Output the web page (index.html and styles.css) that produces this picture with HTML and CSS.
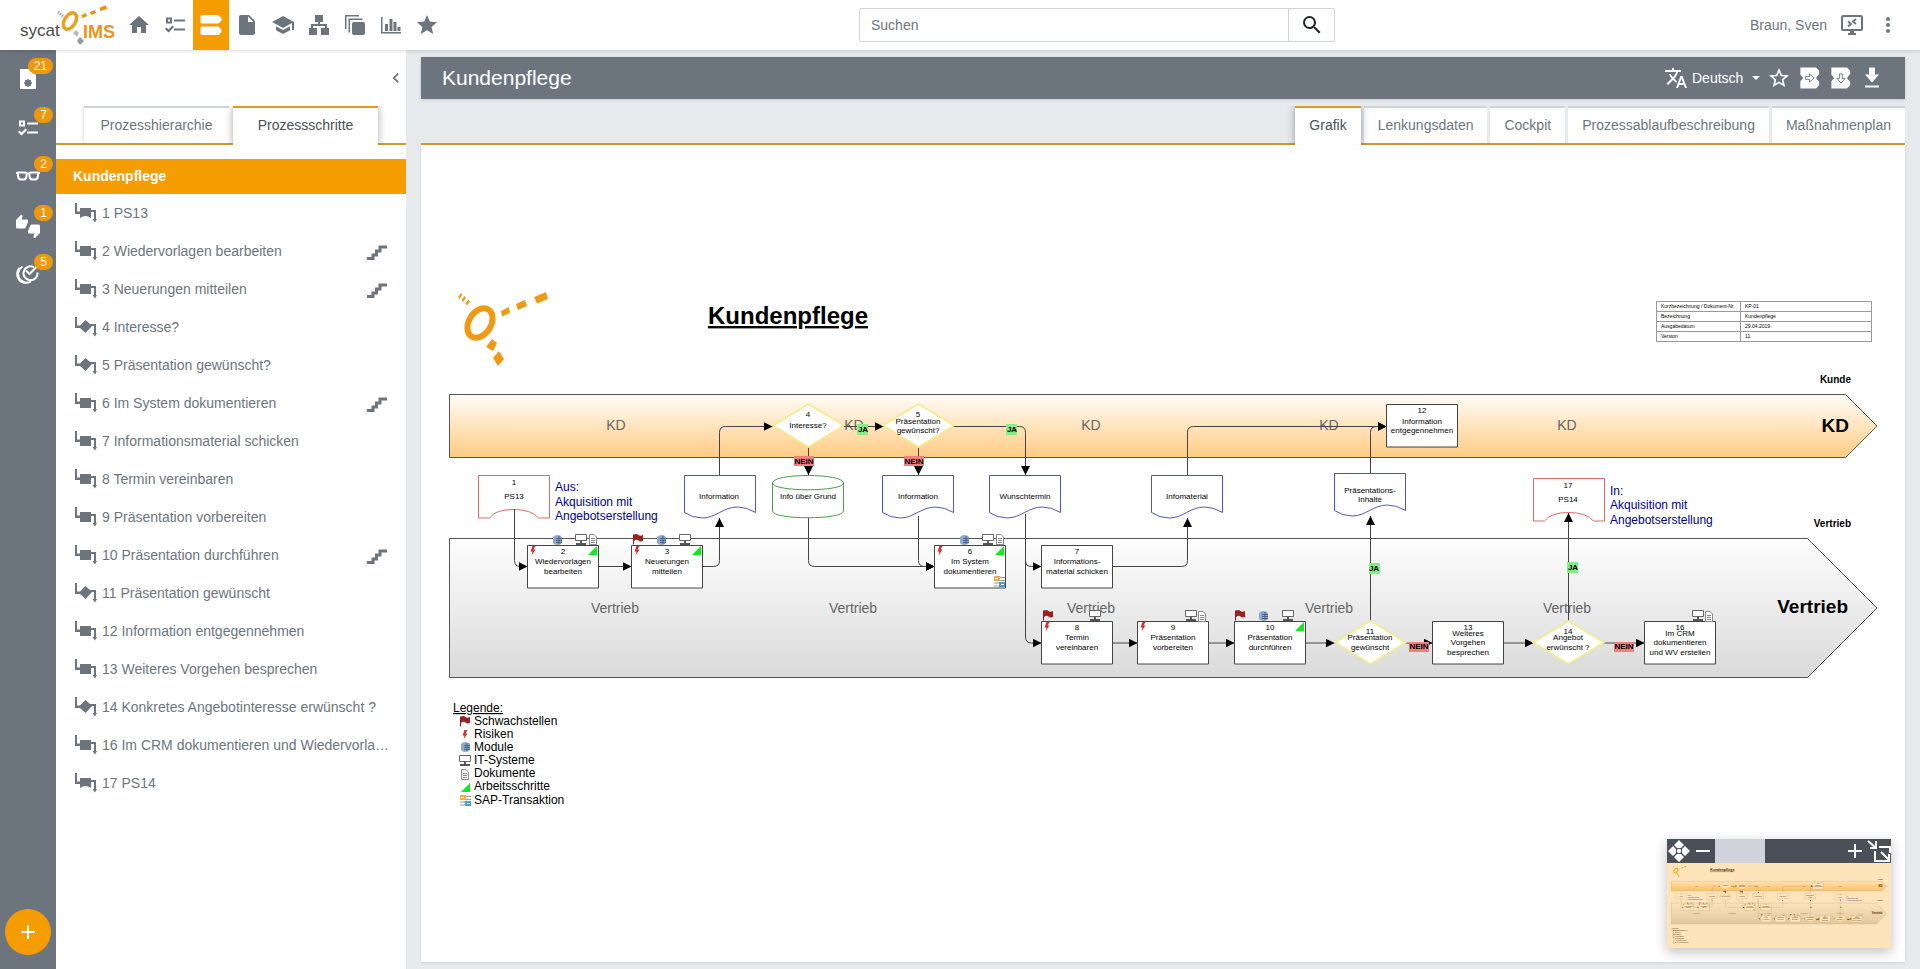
FILE: index.html
```html
<!DOCTYPE html>
<html lang="de">
<head>
<meta charset="utf-8">
<title>sycat IMS – Kundenpflege</title>
<link rel="stylesheet" href="styles.css">
</head>
<body>
<svg class="sprite" aria-hidden="true">
  <symbol id="i-home" viewBox="0 0 24 24"><path d="M10,20V14H14V20H19V12H22L12,3L2,12H5V20H10Z"/></symbol>
  <symbol id="i-tasks" viewBox="0 0 24 24"><path fill-rule="evenodd" d="M3 4.500h6v6H3zM5 6.500v2h2v-2zM11 6.500h11v2H11zM11 15.500h11v2H11zM2 16l1.500-1.500L5.500 16.500 9.500 12.500 11 14l-5.500 5.500z"/></symbol>
  <symbol id="i-process" viewBox="0 0 24 24"><path d="M2.500 2H19.500L22.500 5V7.500L19.500 10.500H2.500L1.500 9.500V3zM2.500 13.500H19.500L22.500 16.500V19L19.500 22H2.500L1.500 21V14.500z"/></symbol>
  <symbol id="i-file" viewBox="0 0 24 24"><path d="M13,9V3.500L18.500,9M6,2C4.890,2 4,2.890 4,4V20A2,2 0 0,0 6,22H18A2,2 0 0,0 20,20V8L14,2H6Z"/></symbol>
  <symbol id="i-school" viewBox="0 0 24 24"><path d="M12,3L1,9L12,15L21,10.090V17H23V9M5,13.180V17.180L12,21L19,17.180V13.180L12,17L5,13.180Z"/></symbol>
  <symbol id="i-org" viewBox="0 0 24 24"><path d="M8 2h8v7h-3v2h7v4h2v7h-8v-7h4v-2H6v2h4v7H2v-7h2v-4h7V9H8z"/></symbol>
  <symbol id="i-stack" viewBox="0 0 24 24"><path d="M2 2h14v1.500H3.500V16H2zM5.500 5.500h14V7H7v12.500H5.500zM11 9h9a2 2 0 0 1 2 2v9a2 2 0 0 1-2 2h-9a2 2 0 0 1-2-2v-9a2 2 0 0 1 2-2z"/></symbol>
  <symbol id="i-chart" viewBox="0 0 24 24"><path d="M2 4h1.500v15H22v1.500H2zM6 11h3v7H6zM10.500 6h3v12h-3zM14.500 9h3v9h-3zM18.500 14h3v4h-3z"/></symbol>
  <symbol id="i-star" viewBox="0 0 24 24"><path d="M12,17.270L18.180,21L16.540,13.970L22,9.240L14.810,8.620L12,2L9.190,8.620L2,9.240L7.450,13.970L5.820,21L12,17.270Z"/></symbol>
  <symbol id="i-star-outline" viewBox="0 0 24 24"><path d="M12,15.390L8.240,17.660L9.230,13.380L5.910,10.500L10.290,10.130L12,6.090L13.710,10.130L18.090,10.500L14.770,13.380L15.760,17.660M22,9.240L14.810,8.630L12,2L9.190,8.630L2,9.240L7.450,13.970L5.820,21L12,17.270L18.180,21L16.540,13.970L22,9.240Z"/></symbol>
  <symbol id="i-search" viewBox="0 0 24 24"><path d="M9.500,3A6.500,6.500 0 0,1 16,9.500C16,11.110 15.410,12.590 14.440,13.730L14.710,14H15.500L20.500,19L19,20.500L14,15.500V14.710L13.730,14.440C12.590,15.410 11.110,16 9.500,16A6.500,6.500 0 0,1 3,9.500A6.500,6.500 0 0,1 9.500,3M9.500,5C7,5 5,7 5,9.500C5,12 7,14 9.500,14C12,14 14,12 14,9.500C14,7 12,5 9.500,5Z"/></symbol>
  <symbol id="i-remote" viewBox="0 0 24 24"><path fill-rule="evenodd" d="M3 2h18a2 2 0 0 1 2 2v12a2 2 0 0 1-2 2h-7v2h2v2H8v-2h2v-2H3a2 2 0 0 1-2-2V4a2 2 0 0 1 2-2zM3 4v12h18V4z"/><path d="M8 8.500l3 2.500-3 2.500M16 6l-3 2.500 3 2.500" fill="none" stroke="currentColor" stroke-width="2"/></symbol>
  <symbol id="i-dots" viewBox="0 0 24 24"><circle cx="12" cy="6" r="2"/><circle cx="12" cy="12" r="2"/><circle cx="12" cy="18" r="2"/></symbol>
  <symbol id="i-chevron" viewBox="0 0 24 24"><path d="M15.410,16.580L10.830,12L15.410,7.410L14,6L8,12L14,18L15.410,16.580Z"/></symbol>
  <symbol id="i-translate" viewBox="0 0 24 24"><path d="M12.870,15.070L10.330,12.560L10.360,12.530C12.100,10.590 13.340,8.360 14.070,6H17V4H10V2H8V4H1V6H12.170C11.500,7.920 10.440,9.750 9,11.350C8.070,10.320 7.300,9.190 6.690,8H4.690C5.420,9.630 6.420,11.170 7.670,12.560L2.580,17.580L4,19L9,14L12.110,17.110L12.870,15.070M18.500,10H16.500L12,22H14L15.120,19H19.870L21,22H23L18.500,10M15.880,17L17.500,12.670L19.120,17H15.880Z"/></symbol>
  <symbol id="i-next" viewBox="0 0 24 24"><path d="M1.500 0.500h17l3.500 3.500v4l-3 3v2l3 3v4l-3.500 3.500h-17v-8l3-3.500-3-3.500z"/><path d="M7 10.500h4.500v-3l5 4.500-5 4.500v-3H7z" fill="#fff" stroke="#6c757d"/></symbol>
  <symbol id="i-down" viewBox="0 0 24 24"><path d="M1.500 0.500h17l3.500 3.500v4l-3 3v2l3 3v4l-3.500 3.500h-17v-8l3-3.500-3-3.500z"/><path d="M10.500 7.500h3v5h3l-4.500 5-4.500-5h3z" fill="#fff" stroke="#6c757d"/></symbol>
  <symbol id="i-download" viewBox="0 0 24 24"><path d="M5,21.500H19V19.500H5M19,8.500H15V1.500H9V8.500H5L12,16.500L19,8.500Z"/></symbol>
  <symbol id="i-filegear" viewBox="0 0 24 24"><path d="M4 2h10l6 6v14H4z"/><g stroke="#6c757d" stroke-width="1.500"><circle cx="12" cy="16" r="2.500" fill="#6c757d"/><path d="M12 12v8M8 16h8M9.300 13.300l5.400 5.400M14.700 13.300l-5.400 5.400"/></g></symbol>
  <symbol id="i-glasses" viewBox="0 0 24 24"><path fill="none" stroke="currentColor" stroke-width="2" d="M0 8.500Q1 7.500 3 7.500H9.500Q10.500 7.500 10.500 9V11Q10 14.500 8 14.500H5Q2.500 14.500 2 11V8M24 8.500Q23 7.500 21 7.500H14.500Q13.500 7.500 13.500 9V11Q14 14.500 16 14.500H19Q21.500 14.500 22 11V8M10.500 8.500H13.500"/></symbol>
  <symbol id="i-thumbs" viewBox="0 0 24 24"><path d="M22.500,10.500H15.750C15.130,10.500 14.600,10.880 14.370,11.410L12.110,16.700C12.040,16.870 12,17.060 12,17.250V18.500A1,1 0 0,0 13,19.500H18.180L17.500,22.680V22.920C17.500,23.230 17.630,23.500 17.830,23.720L18.620,24.500L23.560,19.560C23.830,19.290 24,18.910 24,18.500V12A1.500,1.500 0 0,0 22.500,10.500M12,6.500A1,1 0 0,0 11,5.500H5.820L6.500,2.320V2.090C6.500,1.780 6.370,1.500 6.170,1.290L5.380,0.500L0.440,5.440C0.170,5.710 0,6.090 0,6.500V13A1.500,1.500 0 0,0 1.500,14.500H8.250C8.870,14.500 9.400,14.110 9.630,13.590L11.890,8.300C11.960,8.130 12,7.940 12,7.750V6.500Z"/></symbol>
  <symbol id="i-target" viewBox="0 0 24 24"><path fill="none" stroke="currentColor" stroke-width="2" d="M18 4.200A7 7 0 1 0 21.500 9.500M10 7.500l3.500 3.500L21 3.500M6.500 3.500A8.500 8.500 0 0 0 15 18.500M3.500 5A9 9 0 0 0 10 20"/></symbol>
  <symbol id="i-plus" viewBox="0 0 24 24"><path d="M19 13h-6v6h-2v-6H5v-2h6V5h2v6h6z"/></symbol>
  <symbol id="i-minus" viewBox="0 0 24 24"><path d="M5 11h14v2H5z"/></symbol>
  <symbol id="i-move" viewBox="0 0 24 24"><path d="M12 1l5 5-3 3h-4L7 6zM12 23l5-5-3-3h-4l-3 3zM1 12l5-5 3 3v4l-3 3zM23 12l-5-5-3 3v4l3 3z"/><circle cx="12" cy="12" r="2.200"/></symbol>
  <symbol id="i-fit" viewBox="0 0 24 24"><path fill="none" stroke="currentColor" stroke-width="2" d="M1 2l7 6M3 9h6V2M8 12V22H16M12 8H23V14M14 13l8 8M22 15v7h-6"/></symbol>

  <symbol id="s-task" viewBox="0 0 22 20"><path d="M0 0h2v8.500h3V5h11v2h5v9h1l-2 3.500-2.500-3.500h1.500V9h-3v6H5v-4H0z"/></symbol>
  <symbol id="s-port" viewBox="0 0 22 20"><path d="M0 0h2v8.500h3V5h11v2h5v9h1l-2 3.500-2.500-3.500h1.500V9h-3v6q-5.500-4-11 0v-4H0z"/></symbol>
  <symbol id="s-decision" viewBox="0 0 22 20"><path d="M0 0h2v8.500h3L10.500 3 15 7h6v9h1l-2 3.500-2.500-3.500h1.500V9h-2l-6.500 7L5 11H0z"/></symbol>
  <symbol id="s-stairs" viewBox="0 0 20 16"><path fill="none" stroke="currentColor" stroke-width="3" d="M0 13.500H6V10H9.500V6H13V2H20"/></symbol>
</svg>

<header class="topbar">
  <div class="topbar-left">
    <a class="logo" href="#" aria-label="sycat IMS">
      <svg viewBox="0 0 96 42" width="96" height="42">
        <text x="0" y="32" font-size="17" fill="#4a4a4a">sycat</text>
        <text x="63" y="34" font-size="18" font-weight="bold" fill="#e8941a">IMS</text>
        <ellipse cx="50" cy="17" rx="5.500" ry="9" transform="rotate(32 50 17)" fill="none" stroke="#e8a020" stroke-width="3.500"/>
        <path d="M62 12.500l4.500-2M70.500 9.500l5-2M80 5.500l6.500-2.500" stroke="#e8941a" stroke-width="3.500" fill="none"/>
        <path d="M38 8l6 5" stroke="#aaa" stroke-width="3" stroke-dasharray="1.500 1" fill="none"/>
        <path d="M53 29l3-3 3 3-2 4z" fill="#bbb"/><path d="M57 37l3-4 4 4-4 4z" fill="#999"/>
      </svg>
    </a>
    <nav class="mainnav" aria-label="Hauptnavigation">
      <a href="#" aria-label="Start"><svg><use href="#i-home"/></svg></a>
      <a href="#" aria-label="Aufgaben"><svg><use href="#i-tasks"/></svg></a>
      <a href="#" aria-label="Prozesse" class="active"><svg><use href="#i-process"/></svg></a>
      <a href="#" aria-label="Dokumente"><svg><use href="#i-file"/></svg></a>
      <a href="#" aria-label="Schulung"><svg><use href="#i-school"/></svg></a>
      <a href="#" aria-label="Organisation"><svg><use href="#i-org"/></svg></a>
      <a href="#" aria-label="Module"><svg><use href="#i-stack"/></svg></a>
      <a href="#" aria-label="Auswertung"><svg><use href="#i-chart"/></svg></a>
      <a href="#" aria-label="Favoriten"><svg><use href="#i-star"/></svg></a>
    </nav>
  </div>
  <form class="search">
    <input type="text" placeholder="Suchen" aria-label="Suchen">
    <button type="button" aria-label="Suche starten"><svg><use href="#i-search"/></svg></button>
  </form>
  <div class="topbar-right">
    <span>Braun, Sven</span>
    <button type="button" class="iconbtn" aria-label="Fernzugriff"><svg><use href="#i-remote"/></svg></button>
    <button type="button" class="iconbtn" aria-label="Menü"><svg><use href="#i-dots"/></svg></button>
  </div>
</header>

<div class="shell">
  <nav class="rail" aria-label="Schnellzugriff">
    <a href="#" aria-label="Dokumente"><svg><use href="#i-filegear"/></svg><span class="badge">21</span></a>
    <a href="#" aria-label="Aufgaben"><svg><use href="#i-tasks"/></svg><span class="badge">7</span></a>
    <a href="#" aria-label="Lesen"><svg><use href="#i-glasses"/></svg><span class="badge">2</span></a>
    <a href="#" aria-label="Freigaben"><svg><use href="#i-thumbs"/></svg><span class="badge">1</span></a>
    <a href="#" aria-label="Ziele"><svg><use href="#i-target"/></svg><span class="badge">5</span></a>
    <button type="button" class="fab" aria-label="Neu"><svg><use href="#i-plus"/></svg></button>
  </nav>

  <aside class="side">
    <div class="side-head"><button type="button" class="collapse" aria-label="Einklappen"><svg><use href="#i-chevron"/></svg></button></div>
    <div class="tabs side-tabs">
      <a href="#" class="tab">Prozesshierarchie</a>
      <a href="#" class="tab current">Prozessschritte</a>
    </div>
    <h2 class="side-title">Kundenpflege</h2>
    <ul class="steps">
      <li><a href="#"><svg class="kind"><use href="#s-port"/></svg><span>1 PS13</span></a></li>
      <li><a href="#"><svg class="kind"><use href="#s-task"/></svg><span>2 Wiedervorlagen bearbeiten</span><svg class="stairs"><use href="#s-stairs"/></svg></a></li>
      <li><a href="#"><svg class="kind"><use href="#s-task"/></svg><span>3 Neuerungen mitteilen</span><svg class="stairs"><use href="#s-stairs"/></svg></a></li>
      <li><a href="#"><svg class="kind"><use href="#s-decision"/></svg><span>4 Interesse?</span></a></li>
      <li><a href="#"><svg class="kind"><use href="#s-decision"/></svg><span>5 Präsentation gewünscht?</span></a></li>
      <li><a href="#"><svg class="kind"><use href="#s-task"/></svg><span>6 Im System dokumentieren</span><svg class="stairs"><use href="#s-stairs"/></svg></a></li>
      <li><a href="#"><svg class="kind"><use href="#s-task"/></svg><span>7 Informationsmaterial schicken</span></a></li>
      <li><a href="#"><svg class="kind"><use href="#s-task"/></svg><span>8 Termin vereinbaren</span></a></li>
      <li><a href="#"><svg class="kind"><use href="#s-task"/></svg><span>9 Präsentation vorbereiten</span></a></li>
      <li><a href="#"><svg class="kind"><use href="#s-task"/></svg><span>10 Präsentation durchführen</span><svg class="stairs"><use href="#s-stairs"/></svg></a></li>
      <li><a href="#"><svg class="kind"><use href="#s-decision"/></svg><span>11 Präsentation gewünscht</span></a></li>
      <li><a href="#"><svg class="kind"><use href="#s-task"/></svg><span>12 Information entgegennehmen</span></a></li>
      <li><a href="#"><svg class="kind"><use href="#s-task"/></svg><span>13 Weiteres Vorgehen besprechen</span></a></li>
      <li><a href="#"><svg class="kind"><use href="#s-decision"/></svg><span>14 Konkretes Angebotinteresse erwünscht ?</span></a></li>
      <li><a href="#"><svg class="kind"><use href="#s-task"/></svg><span>16 Im CRM dokumentieren und Wiedervorla…</span></a></li>
      <li><a href="#"><svg class="kind"><use href="#s-port"/></svg><span>17 PS14</span></a></li>
    </ul>
  </aside>

  <main class="content">
    <div class="titlebar">
      <h1>Kundenpflege</h1>
      <div class="tools">
        <label class="lang"><svg><use href="#i-translate"/></svg>
          <select aria-label="Sprache"><option>Deutsch</option></select><i class="caret"></i></label>
        <button type="button" class="iconbtn" aria-label="Favorit"><svg><use href="#i-star-outline"/></svg></button>
        <button type="button" class="iconbtn" aria-label="Nachfolger"><svg class="small"><use href="#i-next"/></svg></button>
        <button type="button" class="iconbtn" aria-label="Unterprozess"><svg class="small"><use href="#i-down"/></svg></button>
        <button type="button" class="iconbtn" aria-label="Herunterladen"><svg><use href="#i-download"/></svg></button>
      </div>
    </div>
    <div class="tabs main-tabs">
      <a href="#" class="tab current">Grafik</a>
      <a href="#" class="tab">Lenkungsdaten</a>
      <a href="#" class="tab">Cockpit</a>
      <a href="#" class="tab">Prozessablaufbeschreibung</a>
      <a href="#" class="tab">Maßnahmenplan</a>
    </div>
    <section class="panel">
      <svg class="diagram" viewBox="421 145 1484 817">
        <defs>
          <linearGradient id="g-kd" x1="0" y1="0" x2="0" y2="1"><stop offset="0" stop-color="#fffdf9"/><stop offset="1" stop-color="#ffcb82"/></linearGradient>
          <linearGradient id="g-v" x1="0" y1="0" x2="0" y2="1"><stop offset="0" stop-color="#fdfdfd"/><stop offset="1" stop-color="#dadada"/></linearGradient>
          <marker id="arrow" markerUnits="userSpaceOnUse" markerWidth="9" markerHeight="9" refX="9" refY="4.500" orient="auto"><path d="M0 0L9 4.500L0 9z"/></marker>
          <path id="n-box" d="M.5.5h71v42.500h-71z" fill="#fff" stroke="#444"/>
          <path id="n-doc" d="M.5.5h71v37q-9-5.500-18-5.500c-14 0-22 11-35 11q-10 0-18-5.500z" fill="#fff" stroke="#5353c0"/>
          <path id="n-port" d="M.5.5h71v42.500h-11q-7-8.500-25-8.500t-24 8.500h-11z" fill="#fff" stroke="#d96a6a"/>
          <path id="n-dia" d="M0 21.500L35.500 0L71 21.500L35.500 43z" fill="#fff" stroke="#f2eb8c" stroke-width="1.500"/>
          <path id="n-cyl" d="M.5 8C.5-2 71.500-2 71.500 8V36C71.500 45 .5 45 .5 36zM.5 8C.5 17 71.500 17 71.500 8" fill="#fff" stroke="#4f9a4f"/>
          <g id="m-flag"><path d="M.5.5V10.500" stroke="#8b1a1a"/><path d="M1 .5q3-1 4.500.5t4.500 0v6q-3 1-4.500-.5t-4.500.5z" fill="#9c2222"/></g>
          <path id="m-bolt" d="M2.500 0H5.500L3.500 3.500H5.500L1.500 9.500L2.500 5.500H0.500z" fill="#d42a2a"/>
          <g id="m-db"><path d="M0 2q1.500-2 4.500-2t4.500 2v6q-1.500 2-4.500 2t-4.500-2z" fill="#8fa9c9"/><path d="M3 3.500h6M3 5.500h6M3 7.500h6M6 1v8" stroke="#48658c" fill="none"/></g>
          <g id="m-pc"><path d="M.5.5h11v6h-11z" fill="#fff" stroke="#666"/><path d="M5 7h2v2h4v2H1V9h4z" fill="#555"/></g>
          <g id="m-doc"><path d="M.5.5h4.500l2.500 2.500v7.500h-7z" fill="#fff" stroke="#888"/><path d="M2 4.500h4M2 6.500h4M2 8.500h4" stroke="#888"/></g>
          <path id="m-tri" d="M0 9L9 0V9z" fill="#10e820"/>
          <g id="m-sap"><path d="M0 0h6v5H0z" fill="#f0a94e"/><path d="M5 6h6v5H5z" fill="#4d9fd6"/><path d="M6 1.500h5M6 4.500h5M0 7h5M0 10h5" stroke="#999"/><path d="M1 2.500h3M7 8.500h3" stroke="#fff"/></g>
        </defs>
        <g id="chart">
          <g transform="translate(457 292)" fill="#f09a14">
            <ellipse cx="23" cy="31" rx="11" ry="16" transform="rotate(32 23 31)" fill="none" stroke="#f09a14" stroke-width="6"/>
            <path d="M44 19l8-4 1 6-8 3.500zM59 12l9-4 2 6-9 4zM77 5l12-5 2 7-11 4.500zM29 55l6-8 5 4-4 8zM36 66l6-7 5 8-6 7z"/>
            <path d="M1 5l3-4 1.500 2-3 4zM4.500 8l3-4 1.500 2-3 4zM8.500 11.500l3-4 1.500 2-3 4z"/>
          </g>
          <text class="d-title" x="708" y="324">Kundenpflege</text>
          <foreignObject x="1656" y="301" width="216" height="42">
            <table class="d-meta">
              <tr><th scope="row">Kurzbezeichnung / Dokument-Nr.</th><td>KP-01</td></tr>
              <tr><th scope="row">Bezeichnung</th><td>Kundenpflege</td></tr>
              <tr><th scope="row">Ausgabedatum</th><td>29.04.2019</td></tr>
              <tr><th scope="row">Version</th><td>11</td></tr>
            </table>
          </foreignObject>
          <g stroke="#555">
            <path d="M449.500 394.500H1845.500L1877 426L1845.500 457.500H449.500z" fill="url(#g-kd)"/>
            <path d="M449.500 538.500H1807.500L1877 608L1807.500 677.500H449.500z" fill="url(#g-v)"/>
          </g>
          <g class="d-lane">
            <text x="616" y="430">KD</text><text x="854" y="430">KD</text><text x="1091" y="430">KD</text><text x="1329" y="430">KD</text><text x="1567" y="430">KD</text>
            <text x="615" y="613">Vertrieb</text><text x="853" y="613">Vertrieb</text><text x="1091" y="613">Vertrieb</text><text x="1329" y="613">Vertrieb</text><text x="1567" y="613">Vertrieb</text>
          </g>
          <g class="d-small"><text x="1851" y="383">Kunde</text><text x="1851" y="527">Vertrieb</text></g>
          <g class="d-big"><text x="1849" y="432">KD</text><text x="1848" y="613">Vertrieb</text></g>

          <use href="#n-port" x="478" y="475"/>
          <g class="d-line">
            <path d="M514.500 509V560.500q0 6 6 6H527.500" />
            <path d="M598.500 566.500H631.500"/>
            <path d="M702.500 566.500H713.500q6 0 6-6V518"/>
            <path d="M719.500 475V432.500q0-6 6-6H772.500"/>
            <path d="M843.500 426.500H883.500"/>
            <path d="M808.500 447V475"/><path d="M918.500 447V475"/>
            <path d="M953.500 426.500H1019.500q6 0 6 6V475"/>
            <path d="M808.500 517V560.500q0 6 6 6H934.500"/>
            <path d="M918.500 516V560.500q0 6 6 6H934.500"/>
            <path d="M1025.500 514V560.500q0 6 6 6H1041.500"/>
            <path d="M1025.500 514V637q0 6 6 6H1041.500"/>
            <path d="M1112.500 566.500H1181.500q6 0 6-6V518"/>
            <path d="M1187.500 475V432.500q0-6 6-6H1386.500"/>
            <path d="M1370.500 473V432.500q0-6 6-6H1386.500"/>
            <path d="M1112.500 643H1137.500"/><path d="M1208.500 643H1234.500"/><path d="M1305.500 643H1334.500"/>
            <path d="M1405.500 643H1432.500"/><path d="M1503.500 643H1533.500"/><path d="M1603.500 643H1644.500"/>
            <path d="M1370.500 622V516"/><path d="M1568.500 622V513"/>
          </g>
          <use href="#n-box" x="527" y="545"/><use href="#n-box" x="631" y="545"/><use href="#n-box" x="934" y="545"/><use href="#n-box" x="1041" y="545"/>
          <use href="#n-box" x="1041" y="621"/><use href="#n-box" x="1137" y="621"/><use href="#n-box" x="1234" y="621"/><use href="#n-box" x="1432" y="621"/><use href="#n-box" x="1644" y="621"/>
          <use href="#n-box" x="1386" y="404"/>
          <use href="#n-doc" x="684" y="475"/><use href="#n-doc" x="882" y="475"/><use href="#n-doc" x="989" y="475"/><use href="#n-doc" x="1151" y="475"/><use href="#n-doc" x="1334" y="473"/>
          <use href="#n-cyl" x="772" y="475"/>
          <path d="M1533.500 478.500h71v42.500h-11q-7-8.500-25-8.500t-24 8.500h-11z" fill="none" stroke="#d96a6a"/>
          <use href="#n-dia" x="773" y="404"/><use href="#n-dia" x="883" y="404"/><use href="#n-dia" x="1335" y="621"/><use href="#n-dia" x="1533" y="621"/>

          <g class="d-node">
            <text x="514" y="485">1</text><text x="514" y="499">PS13</text>
            <text x="563" y="554">2</text><text x="563" y="564">Wiedervorlagen</text><text x="563" y="574">bearbeiten</text>
            <text x="667" y="554">3</text><text x="667" y="564">Neuerungen</text><text x="667" y="574">mitteilen</text>
            <text x="719" y="499">Information</text>
            <text x="808" y="417">4</text><text x="808" y="428">Interesse?</text>
            <text x="808" y="499">Info über Grund</text>
            <text x="918" y="417">5</text><text x="918" y="424">Präsentation</text><text x="918" y="433">gewünscht?</text>
            <text x="918" y="499">Information</text>
            <text x="1025" y="499">Wunschtermin</text>
            <text x="970" y="554">6</text><text x="970" y="564">Im System</text><text x="970" y="574">dokumentieren</text>
            <text x="1077" y="554">7</text><text x="1077" y="564">Informations-</text><text x="1077" y="574">material schicken</text>
            <text x="1077" y="630">8</text><text x="1077" y="640">Termin</text><text x="1077" y="650">vereinbaren</text>
            <text x="1173" y="630">9</text><text x="1173" y="640">Präsentation</text><text x="1173" y="650">vorbereiten</text>
            <text x="1270" y="630">10</text><text x="1270" y="640">Präsentation</text><text x="1270" y="650">durchführen</text>
            <text x="1187" y="499">Infomaterial</text>
            <text x="1370" y="493">Präsentations-</text><text x="1370" y="502">Inhalte</text>
            <text x="1422" y="413">12</text><text x="1422" y="424">Information</text><text x="1422" y="433">entgegennehmen</text>
            <text x="1370" y="634">11</text><text x="1370" y="640">Präsentation</text><text x="1370" y="650">gewünscht</text>
            <text x="1468" y="630">13</text><text x="1468" y="636">Weiteres</text><text x="1468" y="645">Vorgehen</text><text x="1468" y="655">besprechen</text>
            <text x="1568" y="488">17</text><text x="1568" y="502">PS14</text>
            <text x="1568" y="634">14</text><text x="1568" y="640">Angebot</text><text x="1568" y="650">erwünscht ?</text>
            <text x="1680" y="630">16</text><text x="1680" y="636">Im CRM</text><text x="1680" y="645">dokumentieren</text><text x="1680" y="655">und WV erstellen</text>
          </g>
          <g class="d-ref">
            <text x="555" y="491">Aus:</text><text x="555" y="506">Akquisition mit</text><text x="555" y="520">Angebotserstellung</text>
            <text x="1610" y="495">In:</text><text x="1610" y="509">Akquisition mit</text><text x="1610" y="524">Angebotserstellung</text>
          </g>
          <g fill="#86ec86"><path d="M857 424h11v11h-11zM1006 424h11v11h-11zM1369 563h11v11h-11zM1567 562h11v11h-11z"/></g>
          <g fill="#ee8080"><path d="M794 456h20v10h-20zM904 456h20v10h-20zM1409 642h20v10h-20zM1614 642h20v10h-20z"/></g>
          <g class="d-tag">
            <text x="863" y="432">JA</text><text x="1012" y="432">JA</text><text x="1374" y="571">JA</text><text x="1573" y="570">JA</text>
            <text x="804" y="464">NEIN</text><text x="914" y="464">NEIN</text><text x="1419" y="649">NEIN</text><text x="1624" y="649">NEIN</text>
          </g>
          <use href="#m-bolt" x="530" y="546"/><use href="#m-db" x="553" y="535"/><use href="#m-pc" x="575" y="534"/><use href="#m-doc" x="589" y="534"/><use href="#m-tri" x="588" y="546"/>
          <use href="#m-flag" x="633" y="534"/><use href="#m-bolt" x="634" y="546"/><use href="#m-db" x="657" y="535"/><use href="#m-pc" x="679" y="534"/><use href="#m-tri" x="692" y="546"/>
          <use href="#m-bolt" x="937" y="546"/><use href="#m-db" x="960" y="535"/><use href="#m-pc" x="982" y="534"/><use href="#m-doc" x="996" y="534"/><use href="#m-tri" x="995" y="546"/><use href="#m-sap" x="994" y="576"/>
          <use href="#m-flag" x="1043" y="610"/><use href="#m-bolt" x="1044" y="622"/><use href="#m-pc" x="1089" y="610"/>
          <use href="#m-bolt" x="1140" y="622"/><use href="#m-pc" x="1185" y="610"/><use href="#m-doc" x="1198" y="611"/>
          <use href="#m-flag" x="1235" y="610"/><use href="#m-db" x="1259" y="611"/><use href="#m-pc" x="1282" y="610"/><use href="#m-tri" x="1295" y="622"/>
          <use href="#m-pc" x="1692" y="610"/><use href="#m-doc" x="1705" y="611"/>

          <g class="d-legend">
            <text class="d-under" x="453" y="712">Legende:</text>
            <text x="474" y="725">Schwachstellen</text><text x="474" y="738">Risiken</text><text x="474" y="751">Module</text><text x="474" y="764">IT-Systeme</text><text x="474" y="777">Dokumente</text><text x="474" y="790">Arbeitsschritte</text><text x="474" y="804">SAP-Transaktion</text>
          </g>
          <use href="#m-flag" x="460" y="716"/><use href="#m-bolt" x="462" y="730"/><use href="#m-db" x="461" y="742"/><use href="#m-pc" x="459" y="755"/><use href="#m-doc" x="461" y="769"/><use href="#m-tri" x="461" y="783"/><use href="#m-sap" x="460" y="795"/>
        </g>
      </svg>
      <div class="minimap">
        <div class="mini-tools">
          <button type="button" aria-label="Verschieben"><svg><use href="#i-move"/></svg></button>
          <button type="button" aria-label="Verkleinern"><svg><use href="#i-minus"/></svg></button>
          <input type="range" min="0" max="100" value="0" aria-label="Zoom">
          <button type="button" aria-label="Vergrößern"><svg><use href="#i-plus"/></svg></button>
          <button type="button" aria-label="Einpassen"><svg><use href="#i-fit"/></svg></button>
        </div>
        <svg class="mini-view" viewBox="421 273 1484 563" aria-hidden="true">
          <use href="#chart"/>
          <rect x="421" y="273" width="1484" height="563" fill="#f79b00" fill-opacity=".27"/>
        </svg>
      </div>
    </section>
  </main>
</div>
</body>
</html>
```
FILE: styles.css
```css
* { box-sizing: border-box; }
html, body { height: 100%; }
body {
  margin: 0;
  display: flex;
  flex-direction: column;
  background: #e6eaed;
  color: #6c757d;
  font: 14px/20px "Liberation Sans", Arial, sans-serif;
  overflow: hidden;
}
a { color: inherit; text-decoration: none; }
button { border: 0; padding: 0; background: none; color: inherit; font: inherit; }
svg { fill: currentColor; }
.sprite { position: absolute; width: 0; height: 0; }

/* top bar */
.topbar {
  display: grid;
  grid-template-columns: 859fr 476fr 585fr;
  align-items: center;
  height: 50px;
  background: #fff;
  box-shadow: 0 1px 4px rgba(0, 0, 0, .15);
  position: relative;
  z-index: 2;
}
.topbar-left { display: flex; height: 50px; }
.logo { display: flex; align-items: center; width: 121px; padding-left: 20px; }
.mainnav { display: flex; }
.mainnav a { display: flex; align-items: center; justify-content: center; width: 36px; }
.mainnav svg, .iconbtn svg, .search svg, .rail svg, .lang svg { width: 24px; height: 24px; display: block; }
.mainnav .active { background: #f59c00; color: #fff; }
.search { display: flex; height: 34px; border: 1px solid #ced4da; border-radius: 2px; }
.search input {
  flex: 1; min-width: 0; border: 0; padding: 0 11px; background: none;
  font: inherit; color: inherit; outline: none;
}
.search input::placeholder { color: #6c757d; opacity: 1; }
.search button { width: 46px; display: flex; align-items: center; justify-content: center; border-left: 1px solid #ced4da; color: #212529; }
.topbar-right { display: flex; align-items: center; justify-content: flex-end; gap: 12px; padding-right: 20px; }
.topbar-right span { padding-right: 1px; }

/* frame */
.shell { flex: 1; min-height: 0; display: flex; }
.rail { width: 56px; background: #6c757d; color: #fff; display: flex; flex-direction: column; align-items: center; padding: 4px 0 14px; }
.rail a { position: relative; display: flex; align-items: center; justify-content: center; width: 56px; height: 49px; }
.badge {
  position: absolute; top: 4px; right: 3px;
  padding: 0 6px; border-radius: 8px; background: #ee980c;
  font-size: 12px; line-height: 16px;
}
.fab { margin-top: auto; width: 46px; height: 46px; border-radius: 50%; background: #f59c00; display: flex; align-items: center; justify-content: center; }

/* side panel */
.side { width: 350px; background: #fff; display: flex; flex-direction: column; }
.side-head { height: 56px; display: flex; justify-content: flex-end; align-items: center; }
.collapse svg { width: 20px; height: 20px; display: block; }
.tabs { display: flex; height: 39px; border-bottom: 2px solid #cf9b30; }
.tab {
  height: 37px; line-height: 35px; padding: 0 14px;
  background: #fff; border-top: 2px solid #ced4da; white-space: nowrap; text-align: center;
}
.tab.current {
  height: 39px; border-top-color: #dc9a28; color: #495057;
  box-shadow: 0 0 8px rgba(0, 0, 0, .35); clip-path: inset(0 -12px 0 -12px);
  position: relative;
}
.side-tabs { padding-left: 28px; gap: 4px; }
.side-tabs .tab { width: 145px; }
.side-tabs .tab:not(.current) { box-shadow: -1px 0 3px rgba(0, 0, 0, .12); clip-path: inset(0 0 0 -6px); }
.side-title { margin: 14px 0 0; padding-left: 17px; height: 35px; background: #f59c00; color: #fff; font-size: 14px; line-height: 35px; }
.steps { list-style: none; margin: 0; padding: 0; }
.steps a { display: flex; align-items: center; height: 38px; padding: 0 14px 0 19px; }
.steps span { flex: 1; min-width: 0; margin-left: 5px; overflow: hidden; text-overflow: ellipsis; white-space: nowrap; }
.kind { width: 22px; height: 20px; }
.stairs { width: 20px; height: 16px; margin: 4px 5px 0 0; }

/* content */
.content { flex: 1; min-width: 0; display: flex; flex-direction: column; padding: 7px 15px; }
.titlebar { display: flex; align-items: center; justify-content: space-between; height: 42px; padding: 0 21px; background: #6c757d; color: #fff; box-shadow: 0 1px 3px rgba(0, 0, 0, .15); }
.titlebar h1 { margin: 0; font-size: 21px; font-weight: 400; line-height: 30px; }
.tools { display: flex; align-items: center; gap: 7px; }
.iconbtn .small { width: 22px; height: 22px; margin: 1px; }
.lang { display: flex; align-items: center; gap: 4px; }
.lang select { appearance: none; border: 0; padding: 0; background: none; color: inherit; font: inherit; }
.caret { border: 4px solid transparent; border-top-color: #fff; border-bottom: 0; margin-left: 4px; }
.main-tabs { margin-top: 7px; justify-content: flex-end; gap: 3px; }
.panel { position: relative; flex: 1; min-height: 0; background: #fff; overflow: hidden; box-shadow: 0 1px 3px rgba(0, 0, 0, .1); }
.diagram { display: block; width: 100%; height: auto; }

/* diagram text */
.diagram text { fill: #000; }
.diagram .d-title { font-size: 24px; font-weight: bold; text-decoration: underline; }
.d-lane { font-size: 14px; text-anchor: middle; }
.diagram .d-lane text { fill: #666; }
.d-small { font-size: 10px; font-weight: bold; text-anchor: end; }
.d-big { font-size: 19px; font-weight: bold; text-anchor: end; }
.d-line path { fill: none; stroke: #444; marker-end: url(#arrow); }
#arrow path { fill: #000; }
.d-node { font-size: 8px; text-anchor: middle; }
.d-ref { font-size: 12px; }
.diagram .d-ref text { fill: #00008b; }
.d-tag { font-size: 8px; font-weight: bold; text-anchor: middle; }
.d-legend { font-size: 12px; }
.d-under { text-decoration: underline; }
.d-meta { width: 216px; border-collapse: collapse; color: #000; font-size: 5px; line-height: 9px; }
.d-meta th, .d-meta td { border: 1px solid #999; padding: 0 4px; text-align: left; font-weight: 400; }
.d-meta th { width: 84px; }

/* overview window */
.minimap { position: absolute; right: 14px; bottom: 14px; width: 224px; background: #fff; box-shadow: 0 4px 12px rgba(0, 0, 0, .25); }
.mini-tools { display: flex; height: 24px; background: #495057; color: #fff; }
.mini-tools button, .mini-tools svg { width: 24px; height: 24px; display: block; }
.mini-tools input { appearance: none; flex: 1; min-width: 0; margin: 0; background: none; }
.mini-tools input::-webkit-slider-thumb { appearance: none; width: 50px; height: 24px; background: #ced4da; }
.mini-view { display: block; width: 100%; height: auto; }
```
